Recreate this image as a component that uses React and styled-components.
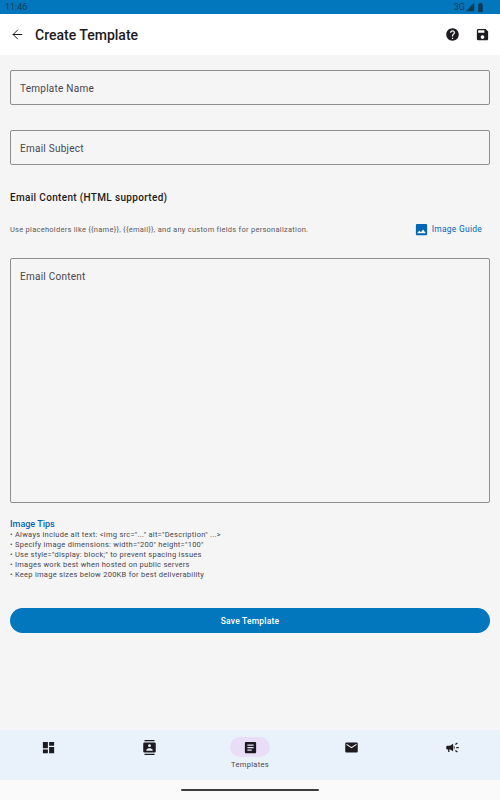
import styled, { createGlobalStyle } from 'styled-components';
import {
    MdHelp,
    MdSave,
    MdImage,
    MdDashboard,
    MdContacts,
    MdArticle,
    MdEmail,
    MdCampaign,
    MdSignalCellular4Bar,
    MdBatteryStd,
} from 'react-icons/md';
import { ArrowLeft } from 'lucide-react';

const GlobalStyle = createGlobalStyle`
    html, body {
        margin: 0;
        padding: 0;
        background: #f5f5f5;
    }
    * {
        box-sizing: border-box;
    }
`;

const Screen = styled.div`
    width: 500px;
    height: 800px;
    display: flex;
    flex-direction: column;
    font-family: Roboto, "Liberation Sans", sans-serif;
    background: #f5f5f5;
    overflow: hidden;
`;

const StatusBar = styled.div`
    height: 14px;
    flex: none;
    background: #0277bd;
    color: #0f3a5a;
    font-size: 9px;
    padding: 0 14px 0 5px;
    display: flex;
    align-items: center;
    justify-content: space-between;
`;

const StatusRight = styled.div`
    display: flex;
    align-items: center;
    gap: 0;
`;

const AppBar = styled.header`
    height: 41px;
    flex: none;
    background: #fff;
    display: flex;
    align-items: center;
    padding: 0 10px;
    color: #1d1b20;
`;

const Title = styled.h1`
    margin: 0 0 0 10px;
    font-size: 14px;
    font-weight: 500;
    flex: 1;
`;

const AppActions = styled.div`
    display: flex;
    align-items: center;
    gap: 15px;
`;

const Content = styled.main`
    flex: 1;
    padding: 15px 10px 0;
    display: flex;
    flex-direction: column;
`;

const Field = styled.div`
    height: ${(p) => p.$height}px;
    flex: none;
    border: 1px solid #8f8f8f;
    border-radius: 2px;
    padding: ${(p) => (p.$multiline ? '12px 9px' : '1px 9px 0')};
    display: flex;
    align-items: ${(p) => (p.$multiline ? 'flex-start' : 'center')};
    font-size: 10px;
    letter-spacing: 0.25px;
    color: #49454f;
    margin-bottom: ${(p) => p.$gap}px;
`;

const SectionTitle = styled.h2`
    margin: 0 0 16px;
    padding-top: 1px;
    font-size: 10px;
    line-height: 14px;
    font-weight: 500;
    letter-spacing: 0.33px;
    color: #1d1b20;
`;

const HelperRow = styled.div`
    display: flex;
    align-items: center;
    justify-content: space-between;
    height: 16px;
    margin-bottom: 21px;
`;

const HelperText = styled.span`
    font-size: 7.5px;
    letter-spacing: 0.26px;
    color: #5c5a60;
`;

const GuideLink = styled.span`
    display: flex;
    align-items: center;
    gap: 3px;
    font-size: 8.5px;
    letter-spacing: 0.25px;
    color: #0565b5;
    padding-right: 8px;
`;

const TipsTitle = styled.div`
    font-size: 9px;
    line-height: 11px;
    font-weight: 500;
    color: #0565b5;
`;

const TipLine = styled.div`
    font-size: 7.5px;
    line-height: 10px;
    letter-spacing: 0.27px;
    color: #49454f;
`;

const Tips = styled.div`
    margin: 0 0 28px;
`;

const SaveButton = styled.button`
    height: 25px;
    width: 100%;
    flex: none;
    border: 0;
    border-radius: 13px;
    background: #0277bd;
    color: #fff;
    font-family: inherit;
    font-size: 8.5px;
    font-weight: 500;
    letter-spacing: 0.2px;
    padding: 0;
`;

const BottomNav = styled.nav`
    height: 50px;
    flex: none;
    background: #e9f2fb;
    display: grid;
    grid-template-columns: repeat(5, 101px);
    justify-content: center;
`;

const NavItem = styled.div`
    display: flex;
    flex-direction: column;
    align-items: center;
    padding-top: 7px;
    color: #1d1b20;
`;

const NavIcon = styled.div`
    width: 40px;
    height: 20px;
    border-radius: 10px;
    display: flex;
    align-items: center;
    justify-content: center;
    background: ${(p) => (p.$active ? '#e8def8' : 'transparent')};
`;

const NavLabel = styled.span`
    margin-top: 3px;
    font-size: 7.5px;
    line-height: 10px;
    letter-spacing: 0.3px;
    color: #49454f;
`;

const GestureArea = styled.div`
    height: 20px;
    flex: none;
    background: #fafafa;
    display: flex;
    align-items: center;
    justify-content: center;
`;

const GestureBar = styled.div`
    width: 138px;
    height: 2px;
    border-radius: 1px;
    background: #3c3c3c;
`;

const tips = [
    '• Always include alt text: <img src="..." alt="Description" ...>',
    '• Specify image dimensions: width="200" height="100"',
    '• Use style="display: block;" to prevent spacing issues',
    '• Images work best when hosted on public servers',
    '• Keep image sizes below 200KB for best deliverability',
];

const navItems = [
    { icon: MdDashboard },
    { icon: MdContacts },
    { icon: MdArticle, label: 'Templates', active: true },
    { icon: MdEmail },
    { icon: MdCampaign },
];

export default function App() {
    return (
        <Screen>
            <GlobalStyle />
            <StatusBar>
                <span>11:46</span>
                <StatusRight>
                    <span>3G</span>
                    <MdSignalCellular4Bar size={10} />
                    <MdBatteryStd size={11} />
                </StatusRight>
            </StatusBar>
            <AppBar>
                <ArrowLeft size={15} strokeWidth={1.6} />
                <Title>Create Template</Title>
                <AppActions>
                    <MdHelp size={15} />
                    <MdSave size={15} />
                </AppActions>
            </AppBar>
            <Content>
                <Field $height={35} $gap={25}>Template Name</Field>
                <Field $height={35} $gap={25}>Email Subject</Field>
                <SectionTitle>Email Content (HTML supported)</SectionTitle>
                <HelperRow>
                    <HelperText>
                        {'Use placeholders like {{name}}, {{email}}, and any custom fields for personalization.'}
                    </HelperText>
                    <GuideLink>
                        <MdImage size={15} />
                        Image Guide
                    </GuideLink>
                </HelperRow>
                <Field $height={245} $gap={16} $multiline>Email Content</Field>
                <Tips>
                    <TipsTitle>Image Tips</TipsTitle>
                    {tips.map((tip) => (
                        <TipLine key={tip}>{tip}</TipLine>
                    ))}
                </Tips>
                <SaveButton>Save Template</SaveButton>
            </Content>
            <BottomNav>
                {navItems.map(({ icon: Icon, label, active }, i) => (
                    <NavItem key={i}>
                        <NavIcon $active={active}>
                            <Icon size={15} />
                        </NavIcon>
                        {label && <NavLabel>{label}</NavLabel>}
                    </NavItem>
                ))}
            </BottomNav>
            <GestureArea>
                <GestureBar />
            </GestureArea>
        </Screen>
    );
}
